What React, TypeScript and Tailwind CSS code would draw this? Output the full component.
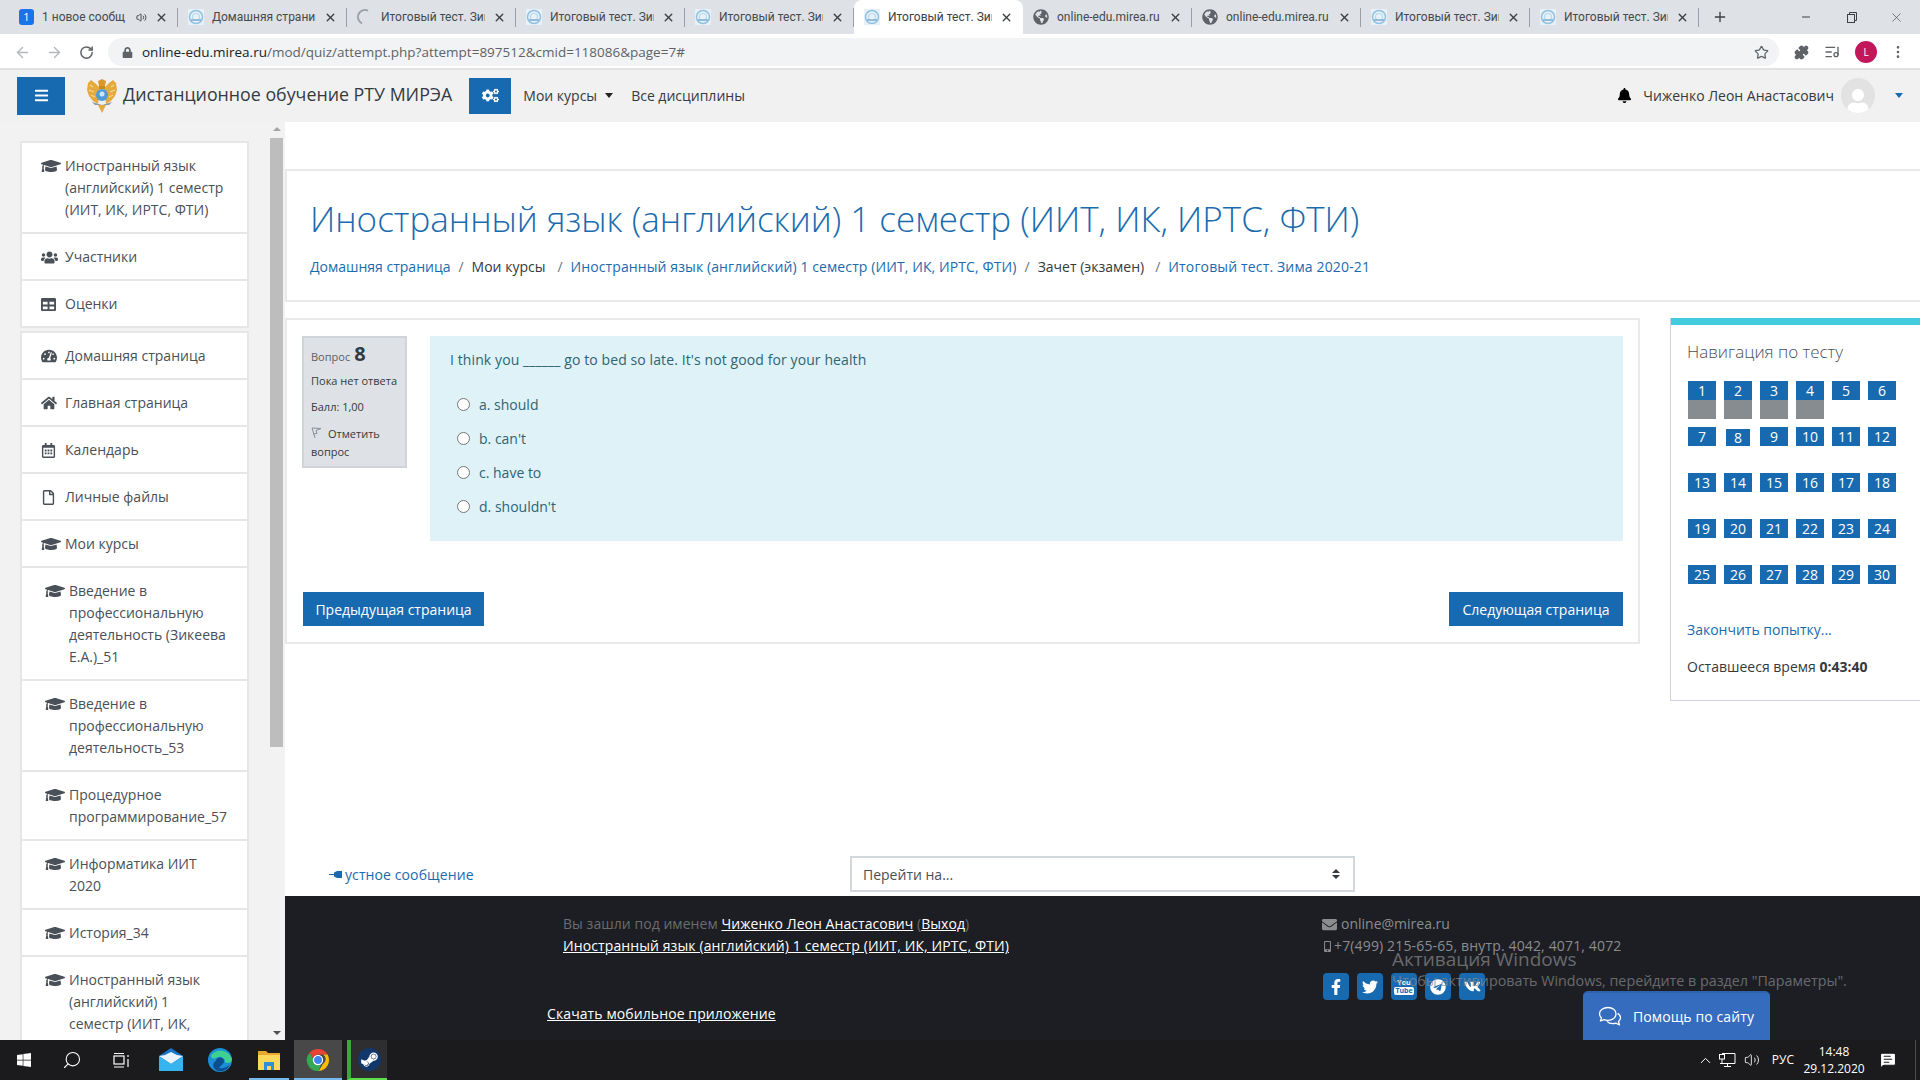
import React from 'react';
import { ArrowLeft, ArrowRight, RotateCw, Star, Puzzle, ListMusic, MoreVertical, Plus, X, Minus, Volume2, ChevronUp, Search, MessageSquareText } from 'lucide-react';
import {
  FaBars, FaBell, FaCogs, FaEnvelope, FaFacebookF, FaGlobeAmericas, FaGraduationCap, FaHome, FaLock, FaMobileAlt, FaRegCalendarAlt,
  FaRegFile, FaSteamSymbol, FaTable, FaTachometerAlt, FaTelegram, FaTwitter, FaUser, FaUsers, FaVk, FaWindows,
} from 'react-icons/fa';

const openSans = { fontFamily: '"Open Sans", "Noto Sans", sans-serif' };

const MireaFavicon = () => (
  <svg width="16" height="16" viewBox="0 0 16 16" className="shrink-0">
    <rect width="16" height="16" fill="#e8f1f8" />
    <circle cx="8" cy="8" r="6.5" fill="none" stroke="#8fc1e3" strokeWidth="1.5" />
    <circle cx="8" cy="8" r="3.5" fill="none" stroke="#b8d8ee" strokeWidth="1.2" />
    <path d="M3 11h10" stroke="#7aa9cc" strokeWidth="1.4" />
  </svg>
);

const Spinner = () => (
  <svg width="16" height="16" viewBox="0 0 16 16" fill="none" stroke="#9aa0a6" strokeWidth="1.8" className="shrink-0">
    <path d="M11 1.6A7 7 0 0 0 5 14.4" />
  </svg>
);

const Tab = ({ icon, title, active, extra }: { icon: React.ReactNode; title: string; active?: boolean; extra?: React.ReactNode }) => (
  <div className={`relative flex h-[34px] w-[169px] shrink-0 items-center gap-[8px] px-[10px] ${active ? 'rounded-t-lg bg-white' : ''}`}>
    {icon}
    <span className={`min-w-0 flex-1 overflow-hidden whitespace-nowrap font-[family-name:Roboto] text-[12px] ${active ? 'text-[#3c4043]' : 'text-[#45494d]'}`}>{title}</span>
    {extra}
    <X size={13} strokeWidth={2.6} className="shrink-0 text-[#3c4043]" />
    {!active && <span className="absolute right-0 top-[8px] h-[19px] w-px bg-[#9aa0a6]" />}
  </div>
);

const tabs = [
  { title: 'Домашняя страниц', icon: <MireaFavicon /> },
  { title: 'Итоговый тест. Зим', icon: <Spinner /> },
  { title: 'Итоговый тест. Зим', icon: <MireaFavicon /> },
  { title: 'Итоговый тест. Зим', icon: <MireaFavicon /> },
];

const MenuRow = ({ icon, lines, nested }: { icon: React.ReactNode; lines: string[]; nested?: boolean }) => (
  <div className={`flex border-b-2 border-[#e6e6e6] pb-[11px] pt-[12px] last:border-b-0 ${nested ? 'pl-[23px]' : 'pl-[19px]'}`}>
    <span className="flex h-[22px] w-[24px] shrink-0 items-center text-[#495057]">{icon}</span>
    <span className="whitespace-pre-line text-[14px] leading-[22px] text-[#495057]">{lines.join('\n')}</span>
  </div>
);

const cap = <FaGraduationCap size={20} />;

const navRows = [
  [1, 2, 3, 4, 5, 6],
  [7, 8, 9, 10, 11, 12],
  [13, 14, 15, 16, 17, 18],
  [19, 20, 21, 22, 23, 24],
  [25, 26, 27, 28, 29, 30],
];

const answers = ['a. should', "b. can't", 'c. have to', "d. shouldn't"];

const Sidebar = () => (
  <aside className="flex h-[918px] w-[285px] shrink-0 overflow-hidden bg-[#f2f2f2]">
    <div className="ml-[20px] mt-[19px] w-[229px] shrink-0">
      <div className="border-2 border-[#e6e6e6] bg-white">
        <MenuRow icon={cap} lines={['Иностранный язык', '(английский) 1 семестр', '(ИИТ, ИК, ИРТС, ФТИ)']} />
        <MenuRow icon={<FaUsers size={17} />} lines={['Участники']} />
        <MenuRow icon={<FaTable size={15} />} lines={['Оценки']} />
      </div>
      <div className="mt-[3px] border-2 border-b-0 border-[#e6e6e6] bg-white">
        <MenuRow icon={<FaTachometerAlt size={16} />} lines={['Домашняя страница']} />
        <MenuRow icon={<FaHome size={16} />} lines={['Главная страница']} />
        <MenuRow icon={<FaRegCalendarAlt size={15} />} lines={['Календарь']} />
        <MenuRow icon={<FaRegFile size={15} />} lines={['Личные файлы']} />
        <MenuRow icon={cap} lines={['Мои курсы']} />
        <MenuRow nested icon={cap} lines={['Введение в', 'профессиональную', 'деятельность (Зикеева', 'Е.А.)_51']} />
        <MenuRow nested icon={cap} lines={['Введение в', 'профессиональную', 'деятельность_53']} />
        <MenuRow nested icon={cap} lines={['Процедурное', 'программирование_57']} />
        <MenuRow nested icon={cap} lines={['Информатика ИИТ', '2020']} />
        <MenuRow nested icon={cap} lines={['История_34']} />
        <MenuRow nested icon={cap} lines={['Иностранный язык', '(английский) 1', 'семестр (ИИТ, ИК,', 'ИРТС, ФТИ)']} />
      </div>
    </div>
    <div className="ml-[21px] flex h-[918px] w-[13px] shrink-0 flex-col items-center">
      <span className="mt-[5px] h-0 w-0 border-x-[4px] border-b-[4px] border-x-transparent border-b-[#a3a3a3]" />
      <div className="mt-[7px] h-[609px] w-[13px] bg-[#bdbdbd]" />
      <span className="mb-[5px] mt-auto h-0 w-0 border-x-[4px] border-t-[4px] border-x-transparent border-t-[#505050]" />
    </div>
  </aside>
);

const QuizNav = () => (
  <div className="mt-[16px] h-[383px] w-[250px] shrink-0 border border-r-0 border-t-0 border-[#ced4da] bg-white">
    <div className="h-[7px] bg-[#41cbdc]" />
    <div className="pl-[17px]">
      <div className="-ml-px mt-[15px] text-[17px] font-light leading-[24px] text-[#495057]">Навигация по тесту</div>
      <div className="mt-[17px] flex flex-col gap-[8px]">
        {navRows.map((row, r) => (
          <div key={r} className="flex h-[38px] gap-[8px]">
            {row.map((n) => (
              <div key={n} className="flex w-[28px] flex-col items-center">
                <div className={`mx-auto flex items-center justify-center bg-[#186ab0] text-[14px] leading-none text-white ${n === 8 ? 'mt-[2px] h-[17px] w-[24px]' : 'h-[19px] w-[28px]'}`}>{n}</div>
                {n <= 4 && <div className="h-[19px] w-[28px] bg-[#878c91]" />}
              </div>
            ))}
          </div>
        ))}
      </div>
      <div className="-ml-px mt-[16px] text-[14px] leading-[22px] text-[#1a6bae]">Закончить попытку...</div>
      <div className="-ml-px mt-[15px] text-[14px] leading-[22px] text-[#343a40]">
        Оставшееся время <b>0:43:40</b>
      </div>
    </div>
  </div>
);

const Crumb = ({ children, link }: { children: React.ReactNode; link?: boolean }) => (
  <span className={link ? 'text-[#1a6bae]' : 'text-[#343a40]'}>{children}</span>
);

const Sep = () => <span className="mx-[8px] text-[#6c757d]">/</span>;

const FlagIcon = () => (
  <svg width="11" height="12" viewBox="0 0 11 12" fill="none" stroke="#868e96" strokeWidth="1" className="mr-[6px] inline align-[-1px]">
    <path d="M1 1l3 10M1 1l9 .5-5 2 1 3-3.6 .5" />
  </svg>
);

const Content = () => (
  <div className="flex min-w-0 flex-1 flex-col">
    <div className="flex-1">
      <div className="mt-[47px] h-[133px] border-y-2 border-l-2 border-[#e9e9e9] pl-[23px]">
        <h1 className="mt-[26px] whitespace-nowrap text-[35px] font-light leading-[44px] text-[#1a6bae]">Иностранный язык (английский) 1 семестр (ИИТ, ИК, ИРТС, ФТИ)</h1>
        <div className="mt-[15px] whitespace-nowrap text-[14px] leading-[22px]">
          <Crumb link>Домашняя страница</Crumb>
          <Sep />
          <span className="mr-[4px]"><Crumb>Мои курсы</Crumb></span>
          <Sep />
          <span className="tracking-[0.1px]"><Crumb link>Иностранный язык (английский) 1 семестр (ИИТ, ИК, ИРТС, ФТИ)</Crumb></span>
          <Sep />
          <span className="mr-[3px]"><Crumb>Зачет (экзамен)</Crumb></span>
          <Sep />
          <span className="tracking-[0.15px]"><Crumb link>Итоговый тест. Зима 2020-21</Crumb></span>
        </div>
      </div>
      <div className="flex">
        <div className="mt-[16px] h-[326px] w-[1355px] shrink-0 border-2 border-[#e9e9e9] pl-[15px] pr-[14px] pt-[16px]">
          <div className="flex items-start pr-px">
            <div className="h-[132px] w-[105px] shrink-0 border-2 border-[#cfd4da] bg-[#dee2e6] pl-[7px] pt-[3px] text-[#343a40]">
              <div className="flex items-baseline gap-[4px] leading-[26px]">
                <span className="text-[11px] text-[#5b6168]">Вопрос</span>
                <span className="text-[20px] font-bold">8</span>
              </div>
              <div className="mt-[2px] text-[11px] leading-[18px]">Пока нет ответа</div>
              <div className="mt-[8px] text-[11px] leading-[18px]">Балл: 1,00</div>
              <div className="mt-[9px] text-[11px] leading-[18px]">
                <FlagIcon />
                Отметить вопрос
              </div>
            </div>
            <div className="ml-[23px] h-[205px] flex-1 bg-[#def2f8] pl-[20px] pt-[13px] text-[14px] text-[#2f6473]">
              <div className="leading-[22px] tracking-[0.1px]">I think you ______ go to bed so late. It's not good for your health</div>
              <div className="mt-[23px] flex flex-col gap-[12px] pl-[7px]">
                {answers.map((a) => (
                  <label key={a} className="flex h-[22px] items-center gap-[9px] leading-[22px]">
                    <span className="-mt-[2px] h-[13px] w-[13px] rounded-full border border-[#767676] bg-white" />
                    {a}
                  </label>
                ))}
              </div>
            </div>
          </div>
          <div className="mt-[50px] flex justify-between">
            <button className="h-[36px] w-[183px] border border-white bg-[#186ab0] text-[14px] text-white">Предыдущая страница</button>
            <button className="h-[36px] w-[176px] border border-white bg-[#186ab0] text-[14px] text-white">Следующая страница</button>
          </div>
        </div>
        <div className="ml-[30px] flex-1">
          <QuizNav />
        </div>
      </div>
    </div>
    <div className="mb-[4px] flex h-[36px] items-center pl-[44px]">
      <svg width="13" height="7" viewBox="0 0 13 7" fill="#1a6bae"><path d="M0 3h5V4H0zM5 1.5 8 0h5v7H8L5 5.5z" /></svg>
      <span className="ml-[3px] w-[505px] text-[14px] tracking-[0.1px] text-[#1a6bae]">устное сообщение</span>
      <div className="flex h-[36px] w-[505px] items-center justify-between border-2 border-[#d3d8de] pl-[11px] pr-[13px] text-[14px] text-[#495057]">
        Перейти на...
        <span className="flex flex-col gap-[2px]">
          <span className="h-0 w-0 border-x-[4px] border-b-[4px] border-x-transparent border-b-[#343a40]" />
          <span className="h-0 w-0 border-x-[4px] border-t-[4px] border-x-transparent border-t-[#343a40]" />
        </span>
      </div>
    </div>
    <Footer />
  </div>
);

const YouTubeStack = () => (
  <span className="flex flex-col items-center text-[7px] font-bold leading-[8px] text-white">
    <span>You</span>
    <span className="rounded-[2px] bg-white px-[1px] text-[#186ab0]">Tube</span>
  </span>
);

const socials = [<FaFacebookF size={16} />, <FaTwitter size={16} />, <YouTubeStack />, <FaTelegram size={16} />, <FaVk size={17} />];

const HelpBubbles = () => (
  <svg width="24" height="22" viewBox="0 0 24 22" fill="none" stroke="#fff" strokeWidth="1.3" strokeLinejoin="round">
    <path d="M10 1.5c-4.6 0-8.5 2.8-8.5 6.3 0 1.6.8 3 2 4.1L2.4 15l3.6-1.4c1.2.5 2.6.7 4 .7 4.6 0 8-2.8 8-6.4S14.6 1.5 10 1.5z" />
    <path d="M19.6 7.4c1.8 1 2.9 2.6 2.9 4.4 0 1.5-.8 2.8-2 3.8l1 3.4-3.6-1.8c-1 .3-2 .5-3.1.5-2.4 0-4.5-.9-5.8-2.3" />
  </svg>
);

const Footer = () => (
  <footer className="relative flex h-[144px] shrink-0 bg-[#1d1e23] text-[14px] leading-[22px]">
    <div className="ml-[262px] w-[775px] pt-[17px]">
      <div className="pl-[16px] tracking-[0.05px] text-[#6b6c70]">
        Вы зашли под именем <span className="text-white underline">Чиженко Леон Анастасович</span> (<span className="text-white underline">Выход</span>)
      </div>
      <div className="pl-[16px] tracking-[0.1px] text-white underline">Иностранный язык (английский) 1 семестр (ИИТ, ИК, ИРТС, ФТИ)</div>
      <div className="mt-[46px] tracking-[0.1px] text-white underline">Скачать мобильное приложение</div>
    </div>
    <div className="pt-[17px] text-[#8b8c90]">
      <div className="flex items-center gap-[4px]"><FaEnvelope size={15} />online@mirea.ru</div>
      <div className="flex items-center gap-px tracking-[0.15px]"><FaMobileAlt size={11} />+7(499) 215-65-65, внутр. 4042, 4071, 4072</div>
      <div className="mt-[16px] flex gap-[8px] pl-px">
        {socials.map((s, i) => (
          <span key={i} className="flex h-[27px] w-[26px] items-center justify-center rounded-[4px] bg-[#186ab0] text-white">{s}</span>
        ))}
      </div>
    </div>
    {/* водяной знак и кнопка помощи лежат поверх футера */}
    <div className="absolute left-[1107px] top-[49px] whitespace-nowrap text-[#8a8a8d] opacity-70">
      <div className="text-[19px] leading-[28px]">Активация Windows</div>
      <div className="-mt-[2px] text-[14.3px] leading-[20px]">Чтобы активировать Windows, перейдите в раздел "Параметры".</div>
    </div>
    <div className="absolute left-[1298px] top-[95px] flex h-[49px] w-[187px] items-center gap-[11px] rounded-t-[5px] border-t-2 border-[#2f62ad] bg-[#366cbd] pl-[15px] text-[14px] tracking-[0.1px] text-white">
      <HelpBubbles />
      Помощь по сайту
    </div>
  </footer>
);

const ChromeLogo = () => (
  <svg width="24" height="24" viewBox="0 0 24 24">
    <path d="M12 1a11 11 0 0 1 9.53 5.5H12a5.5 5.5 0 0 0-5.2 3.7L3.6 4.7A11 11 0 0 1 12 1z" fill="#ea4335" />
    <path d="M21.53 6.5A11 11 0 0 1 12.8 23l4-7a5.5 5.5 0 0 0 .2-9.5z" fill="#fbbc05" />
    <path d="M12.8 23A11 11 0 0 1 3.6 4.7l4.7 8.1a5.5 5.5 0 0 0 6.6 3.7z" fill="#34a853" />
    <circle cx="12" cy="12" r="4.6" fill="#4285f4" stroke="#fff" strokeWidth="1.2" />
  </svg>
);

const MailIcon = () => (
  <svg width="24" height="24" viewBox="0 0 24 24">
    <path d="M0 8 12 0l12 8v15H0z" fill="#1677c9" />
    <path d="M0 8l6-1 6-3 6 3 6 1-12 8z" fill="#e9f3fb" />
    <path d="M0 8l12 8 12-8v15H0z" fill="#35b4ef" />
  </svg>
);

const EdgeIcon = () => (
  <svg width="24" height="24" viewBox="0 0 24 24">
    <circle cx="12" cy="12" r="12" fill="#1b8fd8" />
    <path d="M3 8C6 1 20 0 24 11c0 4-5 5-7 3 1-4-5-7-9-4C6 11 4 11 3 8z" fill="#3fd18f" />
    <path d="M8 13c0-4 7-5 8 0 0 3-3 4-5 7 4 1 9-1 11-4-2 6-9 9-14 6C3 20 6 12 8 13z" fill="#0c4e8e" />
  </svg>
);

const FolderIcon = () => (
  <svg width="22" height="20" viewBox="0 0 22 20">
    <path d="M0 1h8l2 2h12v17H0z" fill="#e8a72e" />
    <path d="M0 5h22v15H0z" fill="#fbd75b" />
    <path d="M6 12h10v8h-3v-4H9v4H6z" fill="#2f8fd8" />
  </svg>
);

const NetworkIcon = () => (
  <svg width="17" height="16" viewBox="0 0 17 16" fill="none" stroke="#fff" strokeWidth="1">
    <path d="M3 1.5h13v10H1M8.5 11.5v3M5 14.5h7" />
    <rect x="0.5" y="2.5" width="5" height="4.5" fill="#1b1b1e" />
    <path d="M3 7v4" />
  </svg>
);

const Taskbar = () => (
  <div className="flex h-[40px] shrink-0 items-center bg-[#1b1b1e] text-white">
    <div className="flex h-[40px] w-[48px] items-center justify-center"><FaWindows size={16} /></div>
    <div className="flex h-[40px] w-[48px] items-center justify-center"><Search size={20} className="-scale-x-100" strokeWidth={1.3} /></div>
    <div className="flex h-[40px] w-[51px] items-center justify-center">
      <svg width="17" height="17" viewBox="0 0 17 17" fill="none" stroke="#fff" strokeWidth="1.2">
        <rect x="1" y="4" width="10" height="8" />
        <path d="M1 1.5h10M1 15h10M15 3v2M15 7v8" />
      </svg>
    </div>
    <div className="flex h-[40px] w-[48px] items-center justify-center"><MailIcon /></div>
    <div className="ml-px flex h-[40px] w-[48px] items-center justify-center"><EdgeIcon /></div>
    <div className="ml-[5px] flex h-[40px] w-[40px] items-center justify-center border-b-2 border-[#76b9ed] pt-[2px]"><FolderIcon /></div>
    <div className="ml-[5px] flex h-[40px] w-[48px] items-center justify-center border-b-2 border-[#76b9ed] bg-[#484848] pt-[2px]"><ChromeLogo /></div>
    <div className="ml-[5px] flex h-[40px] w-[40px] items-center justify-center border-b-2 border-l-[4px] border-[#3fa33f] border-b-[#5fdc4b] bg-[#2e2e30]">
      <span className="flex h-[23px] w-[23px] items-center justify-center rounded-full bg-[#12386b]"><FaSteamSymbol size={19} className="text-white" /></span>
    </div>
    <div className="ml-auto flex h-[40px] items-center">
      <ChevronUp size={17} strokeWidth={1.4} />
      <span className="ml-[5px]"><NetworkIcon /></span>
      <Volume2 size={16} strokeWidth={1.3} className="ml-[8px]" />
      <span className="ml-[12px] text-[12px]">РУС</span>
      <div className="ml-[12px] flex w-[56px] flex-col items-center text-[12px] leading-[17px]">
        <span>14:48</span>
        <span>29.12.2020</span>
      </div>
      <MessageSquareText size={18} strokeWidth={1.5} className="ml-[17px] fill-white text-[#1b1b1e]" />
      <span className="ml-[18px] mr-[4px] h-[40px] w-px bg-[#4b4b4e]" />
    </div>
  </div>
);

const Eagle = () => (
  <svg width="32" height="36" viewBox="0 0 32 36">
    <path d="M14 10 9 5 5 2 2 5l-1 7 2 6 4 5 5 3zM18 10l5-5 4-3 3 3 1 7-2 6-4 5-5 3z" fill="#e5a93d" />
    <path d="M4 7l3 2M3 12l5 2M5 17l4 2M28 7l-3 2M29 12l-5 2M27 17l-4 2" stroke="#f6d98a" strokeWidth="1.2" />
    <path d="M12 3l4-2 4 2-1 5h-6z" fill="#d9972c" />
    <path d="M13 8h6v3h-6z" fill="#c98a24" />
    <circle cx="16" cy="17" r="6" fill="#4f9bd6" />
    <circle cx="16" cy="16" r="2.5" fill="#cfe4f3" />
    <path d="M6 24l10 3 10-3-3 3H9z" fill="#8d99a6" />
    <path d="M12 27h8l-4 8z" fill="#e5a93d" />
  </svg>
);

const App: React.FC = () => {
  return (
    <div className="flex h-[1080px] w-[1920px] flex-col overflow-hidden bg-white" style={openSans}>
      {/* вкладки */}
      <div className="flex h-[34px] shrink-0 items-center bg-[#dee1e6] pl-[9px] text-[#3c4043]">
        <Tab
          icon={<span className="flex h-[16px] w-[15px] shrink-0 items-center justify-center rounded-[3px] bg-[#1a73e8] text-[11px] text-white">1</span>}
          title="1 новое сообщ"
          extra={<Volume2 size={11} className="shrink-0" />}
        />
        {tabs.map((t, i) => <Tab key={i} icon={t.icon} title={t.title} />)}
        <Tab active icon={<MireaFavicon />} title="Итоговый тест. Зим" />
        <Tab icon={<FaGlobeAmericas size={16} className="shrink-0 text-[#5f6368]" />} title="online-edu.mirea.ru" />
        <Tab icon={<FaGlobeAmericas size={16} className="shrink-0 text-[#5f6368]" />} title="online-edu.mirea.ru" />
        <Tab icon={<MireaFavicon />} title="Итоговый тест. Зим" />
        <Tab icon={<MireaFavicon />} title="Итоговый тест. Зим" />
        <Plus size={16} strokeWidth={2} className="ml-[13px]" />
        <div className="ml-auto flex items-center pr-[16px]">
          <Minus size={12} />
          <svg width="12" height="12" viewBox="0 0 12 12" fill="none" stroke="#3c4043" className="ml-[34px]"><rect x="1.5" y="3.5" width="7" height="8" /><path d="M3.5 3.5v-2h7v8h-2" /></svg>
          <X size={15} strokeWidth={1} className="ml-[31px]" />
        </div>
      </div>
      {/* адресная строка */}
      <div className="flex h-[36px] shrink-0 items-center border-b-2 border-[#e1e1e1] bg-white pt-[2px]">
        <ArrowLeft size={17} className="ml-[14px] text-[#b4b7bb]" />
        <ArrowRight size={17} className="ml-[15px] text-[#b4b7bb]" />
        <RotateCw size={15} strokeWidth={2.4} className="ml-[16px] text-[#5f6368]" />
        <div className="ml-[14px] flex h-[28px] w-[1671px] items-center rounded-full bg-[#f1f3f4] pl-[14px] text-[13.5px]">
          <FaLock size={11} className="text-[#5f6368]" />
          <span className="ml-[9px] text-[#202124]">online-edu.mirea.ru</span>
          <span className="text-[#5f6368]">/mod/quiz/attempt.php?attempt=897512&amp;cmid=118086&amp;page=7#</span>
          <Star size={15} className="ml-auto mr-[10px] text-[#5f6368]" />
        </div>
        <Puzzle size={15} className="ml-[15px] fill-[#5f6368] text-[#5f6368]" />
        <ListMusic size={16} className="ml-[15px] text-[#5f6368]" />
        <span className="ml-[15px] flex h-[22px] w-[22px] items-center justify-center rounded-full bg-[#c2185b] text-[10px] text-white">L</span>
        <MoreVertical size={16} className="ml-[13px] text-[#5f6368]" />
      </div>
      {/* шапка сайта */}
      <div className="flex h-[52px] shrink-0 items-center bg-[#f1f1f1] pb-[1px]">
        <div className="ml-[17px] flex h-[38px] w-[48px] items-center justify-center bg-[#186ab0] text-white"><FaBars size={15} /></div>
        <div className="ml-[21px]"><Eagle /></div>
        <span className="ml-[5px] -translate-y-px text-[17.8px] text-[#343a40]">Дистанционное обучение РТУ МИРЭА</span>
        <div className="ml-[17px] flex h-[36px] w-[42px] items-center justify-center bg-[#186ab0] text-white"><FaCogs size={17} /></div>
        <span className="ml-[12px] text-[14px] text-[#343a40]">Мои курсы</span>
        <span className="ml-[8px] h-0 w-0 border-x-[4.5px] border-t-[5px] border-x-transparent border-t-[#222]" />
        <span className="ml-[18px] text-[14px] text-[#343a40]">Все дисциплины</span>
        <div className="ml-auto flex items-center">
          <FaBell size={15} className="text-black" />
          <span className="ml-[11px] text-[14px] text-[#343a40]">Чиженко Леон Анастасович</span>
          <span className="ml-[7px] flex h-[35px] w-[34px] items-end justify-center overflow-hidden rounded-full bg-[#e2e2e2] text-white"><FaUser size={24} /></span>
          <span className="ml-[20px] mr-[17px] h-0 w-0 border-x-[4px] border-t-[5px] border-x-transparent border-t-[#186ab0]" />
        </div>
      </div>
      {/* основная часть */}
      <div className="flex min-h-0 flex-1">
        <Sidebar />
        <Content />
      </div>
      <Taskbar />
    </div>
  );
};

export default App;
